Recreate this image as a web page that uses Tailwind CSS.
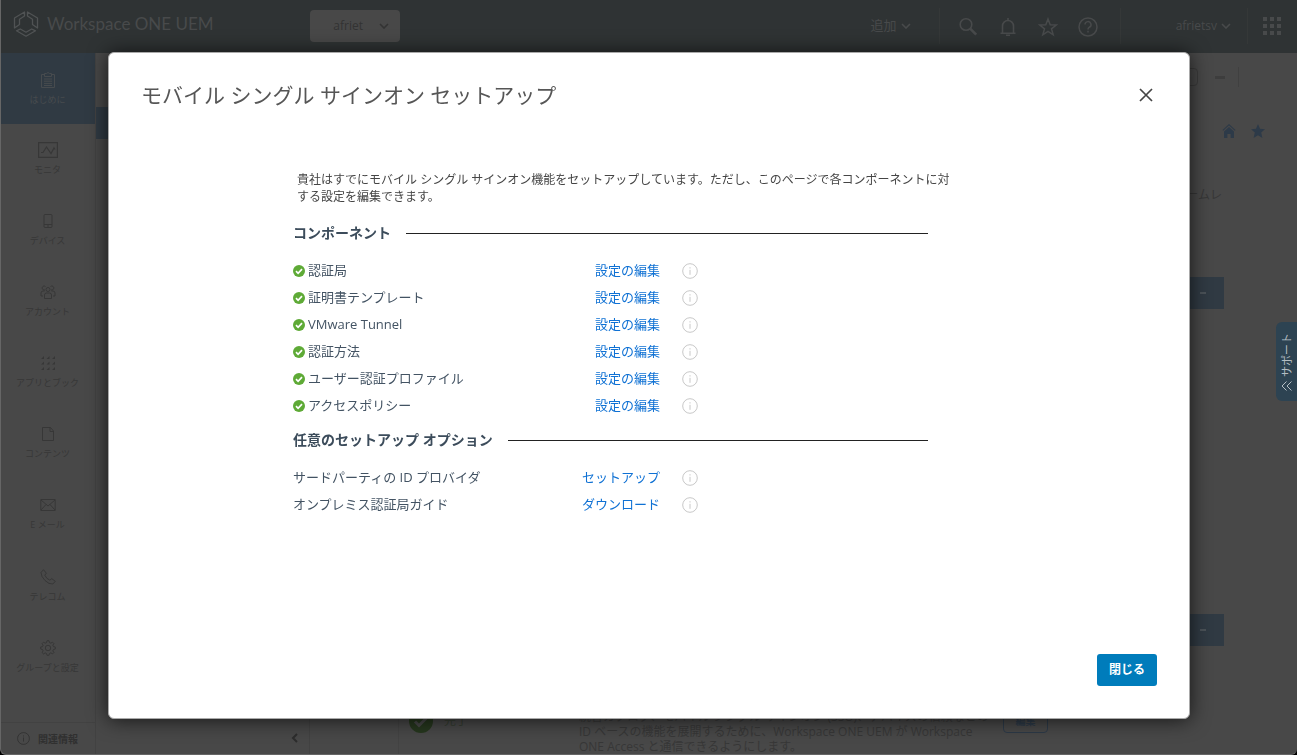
<!DOCTYPE html>
<html lang="ja">
<head>
<meta charset="utf-8">
<meta name="viewport" content="width=device-width, initial-scale=1">
<title>Workspace ONE UEM</title>
<script src="https://cdn.jsdelivr.net/npm/@tailwindcss/browser@4"></script>
</head>
<body class="bg-black font-['Open_Sans','Noto_Sans_CJK_JP',sans-serif]">
<svg class="hidden" aria-hidden="true">
  <symbol id="check" viewBox="0 0 12 12"><circle cx="6" cy="6" r="6" fill="currentColor"/><path d="M3 6.2l2.1 2.1L9 4.2" fill="none" stroke="#fff" stroke-width="1.7"/></symbol>
  <symbol id="info" viewBox="0 0 16 16"><circle cx="8" cy="8" r="7.3" fill="none" stroke="currentColor"/><path d="M8 6.8v5M8 4.2v1.3" stroke="currentColor" fill="none"/></symbol>
  <symbol id="down" viewBox="0 0 10 6"><path d="M1 1l4 4 4-4" fill="none" stroke="currentColor" stroke-width="1.6"/></symbol>
</svg>

<div class="flex h-screen flex-col overflow-hidden rounded-b-md border-b border-l border-[#666] bg-[#484848] text-[#373737]">
  <header class="flex h-[53px] shrink-0 items-center bg-[#2f3334] pb-px text-[#484a4b]">
    <div class="flex w-[309px] items-center gap-2 pb-1 pl-3">
      <svg class="size-[26px]" viewBox="0 0 26 26" fill="none" stroke="#505354" stroke-width="1.3" stroke-linejoin="round"><path d="M11.500 1v4L6.500 8.200v5.300L1.500 17V7z"/><path d="M14.500 1v4l5 3.200v5.300l5 3.500V7z"/><path d="M3.500 19.800L7.300 18l5.700 3.200 5.700-3.200 3.800 1.800L13 25.200z"/></svg>
      <span class="font-[Lato] text-[17px] leading-5">Workspace ONE UEM</span>
    </div>
    <button class="flex h-8 w-[90px] items-center justify-end gap-4 rounded-sm bg-[#484848] pr-[11px] text-xs text-[#333]">afriet<svg class="h-[6px] w-[10px]"><use href="#down"/></svg></button>
    <div class="ml-auto flex h-9 items-center">
      <button class="flex items-center gap-1 pr-7 text-[13px]">追加<svg class="h-[6px] w-[10px]"><use href="#down"/></svg></button>
      <div class="flex h-full items-center gap-5 border-l border-[#353838] pt-[2px] pr-[22px] pl-[18px]">
        <button aria-label="検索"><svg class="size-5" viewBox="0 0 20 20" fill="none" stroke="currentColor"><circle cx="8" cy="7.5" r="5.800" stroke-width="1.6"/><path d="M12.200 11.700l6 6" stroke-width="2.600"/></svg></button>
        <button aria-label="通知"><svg class="size-5" viewBox="0 0 20 20" fill="none" stroke="currentColor" stroke-width="1.6"><path d="M2.500 16.200h15M4.500 16V9a5.500 5.500 0 0 1 11 0v7M10 3.500V1M8 18.300h4"/></svg></button>
        <button aria-label="お気に入り"><svg class="size-5" viewBox="0 0 20 20" fill="none" stroke="currentColor" stroke-width="1.5"><path d="M10 2l2.200 5.700 6.100.3-4.800 3.800 1.700 6L10 14.400l-5.200 3.400 1.700-6L1.700 8l6.100-.3z"/></svg></button>
        <button aria-label="ヘルプ"><svg class="size-5" viewBox="0 0 20 20" fill="none" stroke="currentColor" stroke-width="1.5"><circle cx="10" cy="10" r="9"/><path d="M7 7.600a3 3 0 1 1 4.300 2.700c-1 .5-1.300 1-1.300 2.100M10 13.800v1.700"/></svg></button>
      </div>
      <div class="flex h-full items-center border-x border-[#353838] pr-4 pl-[55px]">
        <button class="flex items-center gap-1 text-xs">afrietsv<svg class="h-[6px] w-[10px]"><use href="#down"/></svg></button>
      </div>
      <button aria-label="アプリ" class="pr-4 pl-[15px]"><svg class="size-[18px]" viewBox="0 0 18 18" fill="currentColor"><path d="M0 0h4v4H0zM7 0h4v4H7zM14 0h4v4h-4zM0 7h4v4H0zM7 7h4v4H7zM14 7h4v4h-4zM0 14h4v4H0zM7 14h4v4H7zM14 14h4v4h-4z"/></svg></button>
    </div>
  </header>

  <div class="flex min-h-0 flex-1">
    <nav class="flex w-[95px] shrink-0 flex-col border-r border-[#424242] text-[9px] leading-3">
      <a href="#" class="flex h-[71px] flex-col items-center justify-center gap-[6px] bg-[#303a43] pr-px text-[#474b4e]"><svg class="size-4" viewBox="0 0 16 16" fill="none" stroke="currentColor"><path d="M4.500 2.500h-3v13h13v-13h-3M4.500 4.500v-3h2l1.500-1 1.500 1h2v3zM4 7h8M4 9.200h8M4 11.400h8M4 13.500h8"/></svg>はじめに</a>
      <a href="#" class="flex h-[71px] flex-col items-center justify-center gap-[6px] pr-px pb-[2px]"><svg class="h-4 w-5" viewBox="0 0 20 16" fill="none" stroke="currentColor"><path d="M.6.6h18.800v14.800H.6zM3 10.500h2L8.500 5l4.500 6.500L16 6l1 1.500" stroke-width="1.2"/></svg>モニタ</a>
      <a href="#" class="flex h-[71px] flex-col items-center justify-center gap-[6px] pr-px pb-[2px]"><svg class="size-4" viewBox="0 0 16 16" fill="none" stroke="currentColor"><rect x="4" y="1.500" width="8" height="13" rx="1"/><path d="M4 11.500h8M8 12v2"/></svg>デバイス</a>
      <a href="#" class="flex h-[71px] flex-col items-center justify-center gap-[6px] pr-px pb-[2px]"><svg class="size-4" viewBox="0 0 16 16" fill="none" stroke="currentColor"><circle cx="8" cy="5.500" r="2"/><path d="M4.500 14.500V11q0-2 2-2h3q2 0 2 2v3.500zM5 6H4a2 2 0 1 1 1.500-3.500M11 6h1a2 2 0 1 0-1.500-3.500M4.500 7H3Q1 7 1 9v3h2M11.500 7H13q2 0 2 2v3h-2"/></svg>アカウント</a>
      <a href="#" class="flex h-[71px] flex-col items-center justify-center gap-[6px] pr-px pb-[2px]"><svg class="size-4" viewBox="0 0 16 16" fill="currentColor"><path d="M4 1v3H1zM9.500 1v3h-3zM15 1v3h-3zM4 6.500v3H1zM9.500 6.500v3h-3zM15 6.500v3h-3zM4 12v3H1zM9.500 12v3h-3zM15 12v3h-3z"/></svg>アプリとブック</a>
      <a href="#" class="flex h-[71px] flex-col items-center justify-center gap-[6px] pr-px pb-[2px]"><svg class="size-4" viewBox="0 0 16 16" fill="none" stroke="currentColor"><path d="M2.500 1.500h8l3 3.500v9.500h-11zM10 1.500V5.500h3.500"/></svg>コンテンツ</a>
      <a href="#" class="flex h-[71px] flex-col items-center justify-center gap-[6px] pr-px pb-[2px]"><svg class="size-4" viewBox="0 0 16 16" fill="none" stroke="currentColor"><path d="M.8 2.500h14.400v11H.8zM1 3l7 6 7-6M1 13l5-5.500M15 13l-5-5.500"/></svg>E メール</a>
      <a href="#" class="flex h-[71px] flex-col items-center justify-center gap-[6px] pr-px"><svg class="size-4" viewBox="0 0 16 16" fill="none" stroke="currentColor"><path d="M1 3.500L3.500.7l2.800 3.500-1.500 2q1.500 3.500 5 5l2-1.500 3.500 2.600-2.500 2.700Q9 15.500 5 11.500T1 3.500z"/></svg>テレコム</a>
      <a href="#" class="flex h-[71px] flex-col items-center justify-center gap-[6px] pr-px"><svg class="size-4" viewBox="0 0 16 16" fill="none" stroke="currentColor"><path d="M6.500 2.600L7 .7h2l.5 1.900 1.300.6 1.700-1 1.400 1.400-1 1.700.6 1.300 1.800.4v2l-1.800.5-.6 1.300 1 1.700-1.400 1.400-1.700-1-1.300.6-.5 1.800H7l-.5-1.800-1.300-.6-1.700 1-1.400-1.400 1-1.700-.6-1.300L.7 9V7l1.800-.4.6-1.300-1-1.700 1.400-1.400 1.700 1z"/><circle cx="8" cy="8" r="2.700"/></svg>グループと設定</a>
      <a href="#" class="mt-auto flex h-8 items-center gap-2 border-t border-[#424242] pl-4 text-[10px] font-bold text-[#303030]"><svg class="size-[13px]"><use href="#info"/></svg>関連情報</a>
    </nav>

    <aside class="flex w-[214px] shrink-0 flex-col border-r border-[#424242] pt-[54px]">
      <div class="h-8 bg-[#303a43]"></div>
      <button aria-label="折りたたむ" class="mt-auto mr-[11px] mb-[11px] self-end text-[#2d2d2d]"><svg class="h-[10px] w-[7px]" viewBox="0 0 7 10"><path d="M6 1L2 5l4 4" fill="none" stroke="currentColor" stroke-width="2"/></svg></button>
    </aside>

    <main class="flex min-w-0 flex-1 flex-col">
      <div class="flex h-12 items-center justify-end gap-[17px] pr-[58px]">
        <span class="h-[18px] w-10 rounded-sm border border-[#3b3b3b]"></span>
        <span class="h-[3px] w-[10px] bg-[#3d3d3d]"></span>
        <span class="-ml-1 h-5 w-px bg-[#404040]"></span>
      </div>
      <div class="mt-[23px] flex justify-end gap-[15px] pr-8 text-[#2d3a48]">
        <svg class="size-[14px]" viewBox="0 0 14 14" fill="currentColor"><path d="M7 0l6.500 6-.7.8L7 1.600 1.200 6.800.5 6zM7 3l5 4.500V14H8.600v-4H5.400v4H2V7.500z"/></svg>
        <svg class="size-[14px]" viewBox="0 0 14 14" fill="currentColor"><path d="M7 0l2 4.800 5 .4-3.800 3.300L11.400 14 7 11.200 2.600 14l1.200-5.500L0 5.200l5-.4z"/></svg>
      </div>
      <p class="mt-[47px] pr-[75px] text-right text-xs leading-5">シームレ</p>
      <div class="mt-[72px] mr-[73px] flex h-8 w-20 items-center justify-end self-end bg-[#303a43] pr-[18px]"><span class="h-[2px] w-[6px] bg-[#4b5258]"></span></div>
      <div class="mt-[305px] mr-[73px] flex h-8 w-20 shrink-0 items-center justify-end self-end bg-[#303a43] pr-[18px]"><span class="h-[2px] w-[6px] bg-[#4b5258]"></span></div>
      <div class="mt-[63px] mr-[73px] ml-[88px] flex shrink-0 items-start border-l border-[#434343] pl-[10px]">
        <svg class="size-6 text-[#26371e]" viewBox="0 0 24 24"><circle cx="12" cy="12" r="12" fill="currentColor"/><path d="M6 12.500l4 4 8-8" fill="none" stroke="#484848" stroke-width="3"/></svg>
        <span class="ml-[11px] w-[135px] text-xs leading-6 text-[#343c30]">完了</span>
        <p class="text-xs leading-[15px] whitespace-nowrap">統合カタログ、モバイル シングル サインオン (SSO)、デバイスの信頼などの<br>ID ベースの機能を展開するために、Workspace ONE UEM が Workspace<br>ONE Access と通信できるようにします。</p>
        <button class="mr-44 ml-auto h-6 w-[45px] rounded-sm border border-[#2d3a48] text-[10px] font-bold text-[#2d3a48]">編集</button>
      </div>
    </main>
  </div>
</div>

<button class="fixed top-[322px] right-0 flex h-[79px] w-[21px] flex-col items-center justify-end gap-1 rounded-l-md bg-[#2d4352] pb-[10px] text-[#b4bdc3]">
  <span class="rotate-180 text-[11px] leading-4 whitespace-nowrap [text-orientation:sideways] [writing-mode:vertical-rl]">サポート</span>
  <svg class="h-[10px] w-[11px]" viewBox="0 0 11 10" fill="none" stroke="currentColor"><path d="M5.500.500L1 5l4.500 4.500M10.500.500L6 5l4.500 4.500"/></svg>
</button>

<div class="fixed inset-0 flex pt-[52px] pr-[107px] pb-9 pl-[108px]">
  <section role="dialog" aria-modal="true" aria-labelledby="dialog-title" class="flex flex-1 flex-col rounded-md border border-[#aaa] bg-white px-8 pb-8 shadow-[0_1px_20px_rgba(0,0,0,0.7)]">
    <div class="flex items-center justify-between pt-[26px]">
      <h1 id="dialog-title" class="text-[21px] leading-8 text-[#565656]">モバイル シングル サインオン セットアップ</h1>
      <button aria-label="閉じる" class="mr-1 text-[#454545]"><svg class="size-[14px]" viewBox="0 0 14 14"><path d="M1 1l12 12M13 1L1 13" fill="none" stroke="currentColor" stroke-width="1.700"/></svg></button>
    </div>
    <div class="ml-[152px] max-w-[635px] text-[13px] text-[#435363]">
      <p class="mt-[60px] ml-1 text-xs leading-[17px] whitespace-nowrap text-[#454545]">貴社はすでにモバイル シングル サインオン機能をセットアップしています。ただし、このページで各コンポーネントに対<br>する設定を編集できます。</p>
      <h2 class="mt-[18px] flex items-center gap-[15px] text-sm leading-5 font-bold text-[#3c4c5b] after:h-px after:flex-1 after:bg-[#222]">コンポーネント</h2>
      <ul class="mt-[14px] leading-[27px]">
        <li class="flex items-center"><svg class="mr-[3px] size-3 text-[#5eaa36]"><use href="#check"/></svg><span class="w-[272px]">認証局</span><a href="#" class="w-20 text-right text-[#0f71d4]">設定の編集</a><button aria-label="認証局の情報" class="ml-[22px] text-[#c8c8c8]"><svg class="size-4"><use href="#info"/></svg></button></li>
        <li class="flex items-center"><svg class="mr-[3px] size-3 text-[#5eaa36]"><use href="#check"/></svg><span class="w-[272px]">証明書テンプレート</span><a href="#" class="w-20 text-right text-[#0f71d4]">設定の編集</a><button aria-label="証明書テンプレートの情報" class="ml-[22px] text-[#c8c8c8]"><svg class="size-4"><use href="#info"/></svg></button></li>
        <li class="flex items-center"><svg class="mr-[3px] size-3 text-[#5eaa36]"><use href="#check"/></svg><span class="w-[272px]">VMware Tunnel</span><a href="#" class="w-20 text-right text-[#0f71d4]">設定の編集</a><button aria-label="VMware Tunnelの情報" class="ml-[22px] text-[#c8c8c8]"><svg class="size-4"><use href="#info"/></svg></button></li>
        <li class="flex items-center"><svg class="mr-[3px] size-3 text-[#5eaa36]"><use href="#check"/></svg><span class="w-[272px]">認証方法</span><a href="#" class="w-20 text-right text-[#0f71d4]">設定の編集</a><button aria-label="認証方法の情報" class="ml-[22px] text-[#c8c8c8]"><svg class="size-4"><use href="#info"/></svg></button></li>
        <li class="flex items-center"><svg class="mr-[3px] size-3 text-[#5eaa36]"><use href="#check"/></svg><span class="w-[272px]">ユーザー認証プロファイル</span><a href="#" class="w-20 text-right text-[#0f71d4]">設定の編集</a><button aria-label="ユーザー認証プロファイルの情報" class="ml-[22px] text-[#c8c8c8]"><svg class="size-4"><use href="#info"/></svg></button></li>
        <li class="flex items-center"><svg class="mr-[3px] size-3 text-[#5eaa36]"><use href="#check"/></svg><span class="w-[272px]">アクセスポリシー</span><a href="#" class="w-20 text-right text-[#0f71d4]">設定の編集</a><button aria-label="アクセスポリシーの情報" class="ml-[22px] text-[#c8c8c8]"><svg class="size-4"><use href="#info"/></svg></button></li>
      </ul>
      <h2 class="mt-[11px] flex items-center gap-[15px] text-sm leading-5 font-bold text-[#3c4c5b] after:h-px after:flex-1 after:bg-[#222]">任意のセットアップ オプション</h2>
      <ul class="mt-[14px] leading-[27px]">
        <li class="flex items-center"><span class="w-[287px]">サードパーティの ID プロバイダ</span><a href="#" class="w-20 text-right text-[#0f71d4]">セットアップ</a><button aria-label="ID プロバイダの情報" class="ml-[22px] text-[#c8c8c8]"><svg class="size-4"><use href="#info"/></svg></button></li>
        <li class="flex items-center"><span class="w-[287px]">オンプレミス認証局ガイド</span><a href="#" class="w-20 text-right text-[#0f71d4]">ダウンロード</a><button aria-label="認証局ガイドの情報" class="ml-[22px] text-[#c8c8c8]"><svg class="size-4"><use href="#info"/></svg></button></li>
      </ul>
    </div>
    <button class="mt-auto h-8 w-[60px] self-end rounded-[3px] bg-[#007cbb] text-xs font-bold text-white">閉じる</button>
  </section>
</div>
</body>
</html>
